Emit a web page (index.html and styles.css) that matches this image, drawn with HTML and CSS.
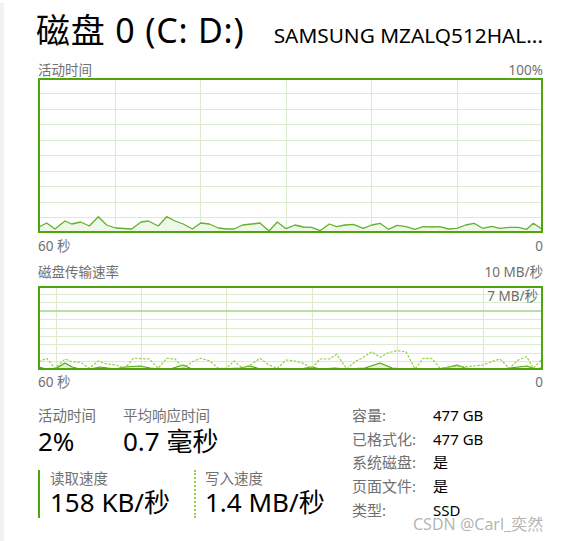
FILE: index.html
```html
<!DOCTYPE html>
<html lang="zh">
<head>
<meta charset="utf-8">
<title>磁盘 0</title>
<link rel="stylesheet" href="styles.css">
</head>
<body>
<div class="page">
  <div class="head">
    <div class="title">磁盘 0 (C: D:)</div>
    <div class="model">SAMSUNG MZALQ512HAL...</div>
  </div>

  <div class="axis top"><span>活动时间</span><span>100%</span></div>
  <div class="graph">
    <svg width="505" height="155" viewBox="38 78 505 155">
      <g stroke="#dbebcf" stroke-width="1">
        <line x1="39" y1="93.5" x2="542" y2="93.5"/>
        <line x1="39" y1="109.5" x2="542" y2="109.5"/>
        <line x1="39" y1="124.5" x2="542" y2="124.5"/>
        <line x1="39" y1="140.5" x2="542" y2="140.5"/>
        <line x1="39" y1="155.5" x2="542" y2="155.5"/>
        <line x1="39" y1="171.5" x2="542" y2="171.5"/>
        <line x1="39" y1="186.5" x2="542" y2="186.5"/>
        <line x1="39" y1="202.5" x2="542" y2="202.5"/>
        <line x1="39" y1="217.5" x2="542" y2="217.5"/>
        <line x1="115.5" y1="79" x2="115.5" y2="232"/>
        <line x1="200.5" y1="79" x2="200.5" y2="232"/>
        <line x1="286.5" y1="79" x2="286.5" y2="232"/>
        <line x1="371.5" y1="79" x2="371.5" y2="232"/>
        <line x1="457.5" y1="79" x2="457.5" y2="232"/>
      </g>
      <polygon fill="#eef7e8" points="39,232 39,227 46.7,223 55,229 65,221 71.7,224 80.7,222 89.3,226 98.3,216.7 106.7,225 115.7,228 131.7,229 141,222 148.3,221 158.3,226 166.7,216.7 175,221 183.3,224 192.3,229 200.7,223 209.3,224 218.3,228 226.7,229 234,229 242.7,225 251.7,224 260,223 269,231 277.3,222 286,228.7 295,225 303.3,227 311.7,227.3 320,230.7 329.3,224 336.7,226.7 345,225 353.3,224.3 363.3,228.3 371.7,225 380,223.3 388.3,229.3 397.3,225.3 406,226.7 415,229.3 423.3,226.7 431.7,227 440,226.7 448.3,229 456.7,228.3 465.7,225 474,223.3 482.7,228.3 491.7,226.3 500,228.3 509.3,227.3 518.3,227.3 526.7,229.3 533.3,223.3 541.7,229 541.7,232"/>
      <polyline fill="none" stroke="#62b22e" stroke-width="1.3" stroke-linejoin="round" points="39,227 46.7,223 55,229 65,221 71.7,224 80.7,222 89.3,226 98.3,216.7 106.7,225 115.7,228 131.7,229 141,222 148.3,221 158.3,226 166.7,216.7 175,221 183.3,224 192.3,229 200.7,223 209.3,224 218.3,228 226.7,229 234,229 242.7,225 251.7,224 260,223 269,231 277.3,222 286,228.7 295,225 303.3,227 311.7,227.3 320,230.7 329.3,224 336.7,226.7 345,225 353.3,224.3 363.3,228.3 371.7,225 380,223.3 388.3,229.3 397.3,225.3 406,226.7 415,229.3 423.3,226.7 431.7,227 440,226.7 448.3,229 456.7,228.3 465.7,225 474,223.3 482.7,228.3 491.7,226.3 500,228.3 509.3,227.3 518.3,227.3 526.7,229.3 533.3,223.3 541.7,229"/>
      <rect x="39" y="79" width="503" height="153" fill="none" stroke="#4da60c" stroke-width="2"/>
    </svg>
  </div>
  <div class="axis bottom"><span>60 秒</span><span>0</span></div>

  <div class="axis top2"><span>磁盘传输速率</span><span>10 MB/秒</span></div>
  <div class="graph small">
    <svg width="505" height="84" viewBox="38 286 505 84">
      <g stroke="#dbebcf" stroke-width="1">
        <line x1="39" y1="294.5" x2="542" y2="294.5"/>
        <line x1="39" y1="302.5" x2="542" y2="302.5"/>
        <line x1="39" y1="319.5" x2="542" y2="319.5"/>
        <line x1="39" y1="328.5" x2="542" y2="328.5"/>
        <line x1="39" y1="336.5" x2="542" y2="336.5"/>
        <line x1="39" y1="344.5" x2="542" y2="344.5"/>
        <line x1="39" y1="353.5" x2="542" y2="353.5"/>
        <line x1="39" y1="361.5" x2="542" y2="361.5"/>
        <line x1="56.5" y1="287" x2="56.5" y2="369"/>
        <line x1="141.5" y1="287" x2="141.5" y2="369"/>
        <line x1="226.5" y1="287" x2="226.5" y2="369"/>
        <line x1="312.5" y1="287" x2="312.5" y2="369"/>
        <line x1="397.5" y1="287" x2="397.5" y2="369"/>
        <line x1="483.5" y1="287" x2="483.5" y2="369"/>
      </g>
      <line x1="39" y1="311" x2="542" y2="311" stroke="#9fd68d" stroke-width="1.6"/>
      <polygon fill="#e4f2da" points="39,369 39,367 46,369 55,369 65,363 72,367 80,369 90,369 100,367 115,369 125,367 140,366 150,368 160,369 170,369 183,365 192,369 220,369 240,368 250,366 260,369 300,369 312,367 320,369 335,368 346,369 365,368 380,363 392,368 405,369 440,369 457,365 465,368 475,369 500,369 510,368 527,366 535,369 541,368 541,369"/>
      <polyline fill="none" stroke="#4da60c" stroke-width="1.2" stroke-linejoin="round" points="39,367 46,369 55,369 65,363 72,367 80,369 90,369 100,367 115,369 125,367 140,366 150,368 160,369 170,369 183,365 192,369 220,369 240,368 250,366 260,369 300,369 312,367 320,369 335,368 346,369 365,368 380,363 392,368 405,369 440,369 457,365 465,368 475,369 500,369 510,368 527,366 535,369 541,368"/>
      <polyline fill="none" stroke="#8fd33b" stroke-width="1.2" stroke-dasharray="2.5 1.5" stroke-linejoin="round" points="39,361.7 46.7,358.3 55,368.3 65,359 71.7,361.7 80.7,362.3 89.3,368.3 98.3,361 106.7,364 115.7,365 125,368.3 133.3,358.3 149.3,359 158.3,368.3 166.7,358.3 175,359 183.3,368.3 192.3,361.7 200.7,358.3 210,361 218.3,368.3 226.7,368.3 234,361 242.7,368.3 251.7,364 260,358.3 269,365 277.3,368.3 286,360 295,361 303.3,363.3 311.7,368.3 320,359 329.3,359 336.7,354.3 346.7,369 355,361.7 363.3,357.3 371.7,351.7 380,357.3 388.3,352.7 397.3,350.7 406,351.7 415,369 423.3,358.3 431.7,358.3 440,368.3 448.3,367.3 456.7,366 465.7,366.7 474,366 482.7,365 491.7,361.7 500,359 509.3,368.3 518.3,360 526.7,356.7 533.3,368.3 541.7,359.7"/>
      <rect x="39" y="287" width="503" height="82" fill="none" stroke="#4da60c" stroke-width="2"/>
    </svg>
    <span class="mark">7 MB/秒</span>
  </div>
  <div class="axis bottom2"><span>60 秒</span><span>0</span></div>

  <div class="stats">
    <div class="left">
      <div class="pair">
        <div class="stat first">
          <div class="lbl">活动时间</div>
          <div class="val">2%</div>
        </div>
        <div class="stat">
          <div class="lbl">平均响应时间</div>
          <div class="val">0.7 毫秒</div>
        </div>
      </div>
      <div class="rw">
        <div class="read">
          <div class="lbl">读取速度</div>
          <div class="val">158 KB/秒</div>
        </div>
        <div class="write">
          <div class="lbl">写入速度</div>
          <div class="val">1.4 MB/秒</div>
        </div>
      </div>
    </div>
    <dl class="info">
      <dt>容量:</dt><dd>477 GB</dd>
      <dt>已格式化:</dt><dd>477 GB</dd>
      <dt>系统磁盘:</dt><dd>是</dd>
      <dt>页面文件:</dt><dd>是</dd>
      <dt>类型:</dt><dd>SSD</dd>
    </dl>
  </div>

  <div class="wm">CSDN @Carl_奕然</div>
</div>
</body>
</html>
```

FILE: styles.css
```css
* { box-sizing: border-box; }
html, body { margin: 0; background: #fff; }
body {
  font-family: "Noto Sans", "Noto Sans CJK SC", sans-serif;
  color: #000;
}
.page {
  position: relative;
  margin-top: 3px;
  height: 538px;
  border-left: 4px solid #f2f2f2;
  padding: 5px 0 0 34px;
  overflow: hidden;
}
.head {
  display: flex;
  justify-content: space-between;
  align-items: baseline;
  width: 505px;
  height: 44px;
}
.title {
  font-size: 34px;
  line-height: 44px;
  letter-spacing: 0.8px;
  margin-left: -2px;
  white-space: nowrap;
}
.model {
  font-size: 20.8px;
  line-height: 44px;
  white-space: nowrap;
}
.axis {
  display: flex;
  justify-content: space-between;
  width: 505px;
  font-size: 13.5px;
  line-height: 15px;
  color: #707070;
}
.axis.top { margin-top: 11px; }
.axis.bottom { margin-top: 6px; }
.axis.top2 { margin-top: 11px; }
.axis.bottom2 { margin-top: 5px; }
.axis.top2 + .graph { margin-top: 6px; }
.graph {
  position: relative;
  width: 505px;
  height: 155px;
}
.graph.small { height: 84px; }
.graph svg { display: block; }
.mark {
  position: absolute;
  right: 5px;
  top: 3px;
  font-size: 13.5px;
  line-height: 15px;
  color: #6b6b6b;
}
.stats {
  display: flex;
  margin-top: 15px;
}
.left { width: 314px; }
.pair { display: flex; }
.stat.first { width: 85px; }
.lbl {
  font-size: 14.5px;
  line-height: 20px;
  color: #707070;
  white-space: nowrap;
}
.val {
  font-size: 26px;
  line-height: 32px;
  white-space: nowrap;
}
.rw {
  display: flex;
  margin-top: 13px;
}
.rw .lbl { line-height: 17px; }
.rw .val { line-height: 31px; }
.read {
  width: 156px;
  border-left: 2px solid #4da60c;
  padding-left: 10px;
}
.write {
  border-left: 2px dotted #8fd33b;
  padding-left: 9px;
}
.info {
  display: grid;
  grid-template-columns: 81px auto;
  margin: -1px 0 0 0;
  font-size: 15px;
  line-height: 23.7px;
}
.info dt { color: #707070; }
.info dd { margin: 0; }
.wm {
  position: absolute;
  left: 409px;
  top: 511px;
  font-size: 16px;
  line-height: 20px;
  color: rgba(130, 130, 130, 0.6);
  white-space: nowrap;
}
```
